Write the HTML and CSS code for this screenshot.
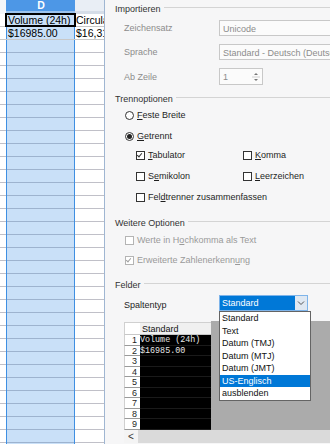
FILE: index.html
```html
<!DOCTYPE html>
<html lang="de">
  <head>
    <meta charset="UTF-8" />
    <title>Textimport</title>
    <link rel="stylesheet" href="styles.css">
  </head>
  <body>
    <div class="screen">
      <!-- spreadsheet behind the dialog -->
      <div class="sheet">
        <div class="sheet-row head">
          <div class="c0"></div>
          <div class="cd">D</div>
          <div class="ce"></div>
        </div>
        <div class="sheet-row">
          <div class="c0"></div>
          <div class="cd cur">Volume (24h)</div>
          <div class="ce">Circulating</div>
        </div>
        <div class="sheet-row">
          <div class="c0"></div>
          <div class="cd">$16985.00</div>
          <div class="ce">$16,315</div>
        </div>
        <div class="sheet-fill">
          <div class="c0"></div>
          <div class="cd"></div>
          <div class="ce"></div>
        </div>
      </div>

      <div class="dialog">
        <div class="sec-head">Importieren</div>
        <div class="field first">
          <span class="label off">Zeichensatz</span>
          <div class="box off">Unicode</div>
        </div>
        <div class="field">
          <span class="label off">Sprache</span>
          <div class="box off">Standard - Deutsch (Deutschland)</div>
        </div>
        <div class="field spin-row">
          <span class="label off">Ab Zeile</span>
          <div class="spin">
            <span class="off">1</span>
            <div class="arrows">
              <svg width="8" height="14" viewBox="0 0 8 14">
                <path d="M2 5 L4 3 L6 5 Z" fill="#777" />
                <line x1="0" y1="7" x2="8" y2="7" stroke="#d0d0d0" />
                <path d="M2 9 L4 11 L6 9 Z" fill="#777" />
              </svg>
            </div>
          </div>
        </div>

        <div class="sec-head sep">Trennoptionen</div>
        <div class="opt radio-row">
          <span class="radio"></span><span><u>F</u>este Breite</span>
        </div>
        <div class="opt radio-row gap">
          <span class="radio on"></span><span><u>G</u>etrennt</span>
        </div>
        <div class="opt-grid">
          <div class="opt"><span class="check on"></span><span><u>T</u>abulator</span></div>
          <div class="opt"><span class="check"></span><span><u>K</u>omma</span></div>
          <div class="opt"><span class="check"></span><span>S<u>e</u>mikolon</span></div>
          <div class="opt"><span class="check"></span><span><u>L</u>eerzeichen</span></div>
          <div class="opt wide"><span class="check"></span><span>Fel<u>d</u>trenner zusammenfassen</span></div>
        </div>

        <div class="sec-head sep2">Weitere Optionen</div>
        <div class="opt dis"><span class="check"></span><span>Werte in H<u>o</u>chkomma als Text</span></div>
        <div class="opt dis gap"><span class="check on"></span><span>Erweiterte Zahlenerkenn<u>u</u>ng</span></div>

        <div class="sec-head sep3">Felder</div>
        <div class="field combo-row">
          <span class="label">Spaltentyp</span>
          <div class="combo">
            <span class="combo-val">Standard</span>
            <span class="combo-btn">
              <svg width="8" height="6" viewBox="0 0 8 6">
                <path d="M1 1.5 L4 4.5 L7 1.5" fill="none" stroke="#555" stroke-width="1" />
              </svg>
            </span>
            <ul class="combo-list">
              <li>Standard</li>
              <li>Text</li>
              <li>Datum (TMJ)</li>
              <li>Datum (MTJ)</li>
              <li>Datum (JMT)</li>
              <li class="sel">US-Englisch</li>
              <li>ausblenden</li>
            </ul>
          </div>
        </div>

        <div class="preview">
          <div class="pv-main">
            <div class="pv-grid">
              <div class="pv-row pv-head"><span class="num"></span><span class="pv-cell">Standard</span></div>
              <div class="pv-row"><span class="num">1</span><span class="pv-cell">Volume (24h)</span></div>
              <div class="pv-row"><span class="num">2</span><span class="pv-cell">$16985.00</span></div>
              <div class="pv-row"><span class="num">3</span><span class="pv-cell"></span></div>
              <div class="pv-row"><span class="num">4</span><span class="pv-cell"></span></div>
              <div class="pv-row"><span class="num">5</span><span class="pv-cell"></span></div>
              <div class="pv-row"><span class="num">6</span><span class="pv-cell"></span></div>
              <div class="pv-row"><span class="num">7</span><span class="pv-cell"></span></div>
              <div class="pv-row"><span class="num">8</span><span class="pv-cell"></span></div>
              <div class="pv-row"><span class="num">9</span><span class="pv-cell"></span></div>
            </div>
            <div class="pv-empty"></div>
          </div>
          <div class="pv-scroll"><span class="pv-left">&lt;</span></div>
        </div>
      </div>
    </div>
  </body>
</html>
```

FILE: styles.css
```css
html,
body {
  margin: 0;
  height: 100%;
  overflow: hidden;
}

body {
  font-family: "Liberation Sans", Arial, sans-serif;
  background-color: #ffffff;
}

.screen {
  display: flex;
  width: 330px;
  height: 444px;
}

/* spreadsheet */

.sheet {
  width: 104px;
  display: flex;
  flex-direction: column;
  font-size: 10.5px;
  color: #000;
  border-right: 1px solid #9fb6d2;
}

.sheet-row {
  display: flex;
  height: 12px;
  line-height: 12px;
  border-bottom: 1px solid #c8c8c8;
}

.c0 {
  width: 6px;
  flex: none;
}

.cd {
  width: 66px;
  flex: none;
  background-color: #c9e0f8;
  border-left: 1px solid #3f8fe2;
  border-right: 1px solid #3f8fe2;
  padding-left: 1px;
  white-space: nowrap;
  overflow: hidden;
}

.ce {
  flex: 1;
  padding-left: 1px;
  white-space: nowrap;
  overflow: hidden;
}

.sheet-row.head {
  height: 14px;
  line-height: 11px;
  border-bottom: 0;
}

.head .c0 {
  background-color: #f4f6f9;
}

.head .cd {
  background-color: #4d97e6;
  color: #ffffff;
  font-weight: bold;
  text-align: center;
  border-bottom: 3px solid #9cc4ee;
  border-left: 0;
  border-right: 0;
  width: 68px;
}

.head .ce {
  background-color: #e9eef5;
  border-bottom: 3px solid #d5dde8;
}

.cur {
  outline: 2px solid #000;
  outline-offset: -1px;
}

.sheet-fill {
  flex: 1;
  display: flex;
}

.sheet-fill > div {
  background-image: repeating-linear-gradient(to bottom, transparent 0 12px, #c0c0c8 12px 13px);
}

.sheet-fill .cd {
  background-color: #c9e0f8;
  background-image: repeating-linear-gradient(to bottom, transparent 0 12px, #9db3cf 12px 13px);
}

/* dialog */

.dialog {
  flex: 1;
  background-color: #f6f6f7;
  padding-left: 10px;
  font-size: 9px;
  color: #1e1e1e;
  overflow: hidden;
  display: flex;
  flex-direction: column;
}

.sec-head {
  display: flex;
  align-items: center;
  gap: 3px;
  height: 18px;
  color: #333;
  white-space: nowrap;
}

.sec-head::after {
  content: "";
  flex: 1;
  border-top: 1px solid #d4d4d4;
  margin-top: -3px;
}

.sec-head.sep {
  margin-top: 5px;
}

.sec-head.sep2 {
  margin-top: 10px;
}

.sec-head.sep3 {
  margin-top: 9px;
}

.off {
  color: #8c8c8c;
}

.field {
  display: flex;
  align-items: center;
  margin-top: 8px;
}

.field.first {
  margin-top: 2px;
}

.label {
  width: 104px;
  flex: none;
  padding-left: 9px;
  box-sizing: border-box;
}

.box {
  flex: 1;
  height: 16px;
  line-height: 16px;
  box-sizing: border-box;
  border: 1px solid #c8c8c8;
  border-right: 0;
  background-color: #fbfbfb;
  padding-left: 3px;
  white-space: nowrap;
  overflow: hidden;
}

.spin-row {
  margin-top: 8px;
}

.spin {
  width: 44px;
  height: 17px;
  box-sizing: border-box;
  border: 1px solid #c8c8c8;
  background-color: #fbfbfb;
  display: flex;
  align-items: center;
  padding-left: 3px;
}

.spin span {
  flex: 1;
}

.arrows {
  width: 9px;
  height: 15px;
  display: flex;
  align-items: center;
  margin-right: 1px;
}

/* options */

.opt {
  display: flex;
  align-items: center;
  gap: 3px;
  height: 14px;
  white-space: nowrap;
}

.opt u {
  text-decoration-thickness: 1px;
  text-underline-offset: 1px;
}

.radio-row {
  padding-left: 10px;
}

.radio-row.gap {
  margin-top: 7px;
}

.radio {
  width: 7px;
  height: 7px;
  border: 1px solid #333;
  border-radius: 50%;
  background-color: #fff;
  position: relative;
}

.radio.on::after {
  content: "";
  position: absolute;
  left: 1px;
  top: 1px;
  width: 5px;
  height: 5px;
  border-radius: 50%;
  background-color: #222;
}

.check {
  width: 7px;
  height: 7px;
  border: 1px solid #333;
  background-color: #fff;
  position: relative;
}

.check.on::after {
  content: "";
  position: absolute;
  left: 1px;
  top: 0px;
  width: 2px;
  height: 4px;
  border-right: 1px solid #333;
  border-bottom: 1px solid #333;
  transform: rotate(40deg);
}

.opt-grid {
  display: grid;
  grid-template-columns: 107px 1fr;
  row-gap: 7px;
  margin-top: 5px;
  padding-left: 21px;
}

.opt-grid .wide {
  grid-column: 1 / 3;
}

.opt.dis {
  color: #9a9a9a;
  padding-left: 10px;
  margin-top: 1px;
}

.opt.dis.gap {
  margin-top: 6px;
}

.opt.dis .check {
  border-color: #b4b4b4;
}

.opt.dis .check.on::after {
  border-color: #a0a0a0;
}

/* combo */

.combo-row {
  margin-top: 1px;
}

.combo-row .label {
  padding-top: 4px;
}

.combo {
  position: relative;
  width: 89px;
  height: 16px;
  box-sizing: border-box;
  border: 1px solid #7eb4ea;
  display: flex;
}

.combo-val {
  flex: 1;
  background-color: #0078d7;
  color: #fff;
  line-height: 14px;
  padding-left: 2px;
}

.combo-btn {
  width: 12px;
  background-color: #dfe8f2;
  display: flex;
  align-items: center;
  justify-content: center;
}

.combo-list {
  position: absolute;
  left: -1px;
  top: 15px;
  width: 90px;
  margin: 0;
  padding: 0;
  list-style: none;
  background-color: #fff;
  border: 1px solid #646464;
  z-index: 5;
}

.combo-list li {
  height: 12.5px;
  line-height: 12.5px;
  padding-left: 2px;
  color: #111;
}

.combo-list li.sel {
  background-color: #0078d7;
  color: #fff;
}

/* preview */

.preview {
  margin-top: 10px;
  margin-left: 9px;
  flex: 1;
  display: flex;
  flex-direction: column;
}

.pv-main {
  display: flex;
  height: 109px;
}

.pv-grid {
  width: 87px;
  display: flex;
  flex-direction: column;
  padding-top: 1px;
  background-color: #f6f6f7;
}

.pv-row {
  display: flex;
  height: 10.5px;
}

.pv-row.pv-head {
  height: 13px;
}

.num {
  width: 16px;
  box-sizing: border-box;
  background-color: #fff;
  border-bottom: 1px solid #9a9a9a;
  border-left: 1px solid #d0d0d0;
  text-align: right;
  padding-right: 3px;
  font-size: 9px;
  line-height: 10px;
}

.pv-head .num {
  border-bottom: 1px solid #c8c8c8;
  border-top: 1px solid #d0d0d0;
}

.pv-cell {
  flex: 1;
  background-color: #000;
  color: #e6e6e6;
  font-family: "Liberation Mono", "Courier New", monospace;
  font-size: 8.4px;
  line-height: 10px;
  white-space: nowrap;
  border-bottom: 1px solid #1a1a1a;
}

.pv-head .pv-cell {
  background-color: #f0f0f0;
  color: #111;
  font-family: "Liberation Sans", Arial, sans-serif;
  font-size: 9px;
  line-height: 12px;
  padding-left: 2px;
  border-top: 1px solid #d0d0d0;
  border-bottom: 1px solid #c8c8c8;
}

.pv-empty {
  flex: 1;
  background-color: #ababab;
}

.pv-scroll {
  height: 13px;
  background-color: #dadada;
  display: flex;
  align-items: center;
}

.pv-left {
  width: 14px;
  height: 13px;
  line-height: 13px;
  background-color: #f4f4f4;
  font-size: 10px;
  padding-left: 4px;
  box-sizing: border-box;
  color: #333;
}
```
